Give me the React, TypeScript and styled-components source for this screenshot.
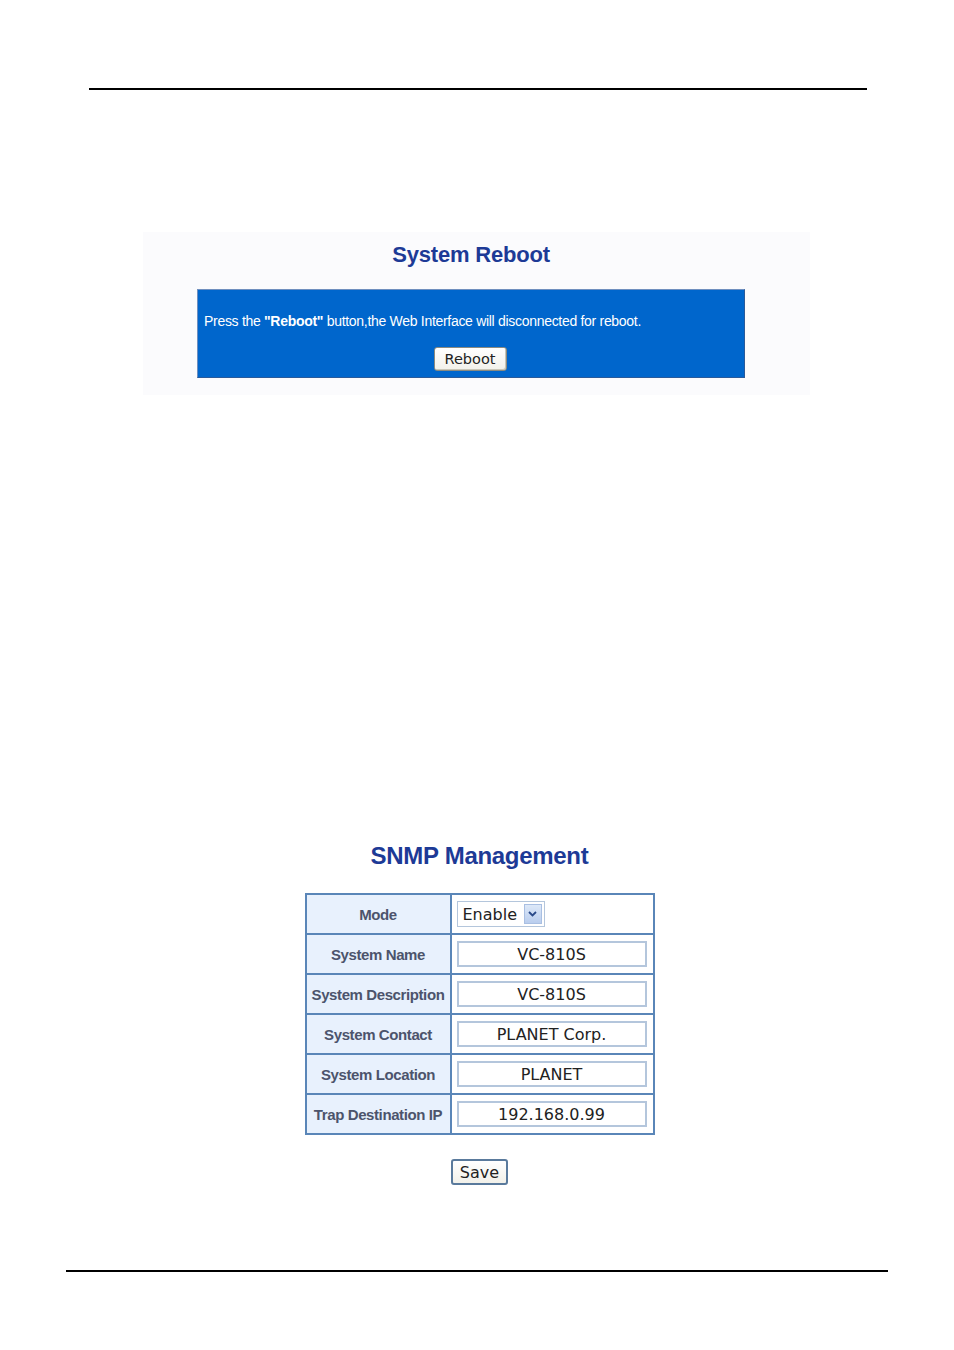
import React from 'react'
import styled, { createGlobalStyle } from 'styled-components'

const GlobalStyle = createGlobalStyle`
  html, body {
    margin: 0;
    padding: 0;
    background: #ffffff;
  }
  body {
    font-family: "Liberation Sans", Arial, sans-serif;
  }
`

const Page = styled.div`
  width: 954px;
  height: 1350px;
  position: relative;
  display: flex;
  flex-direction: column;
`

const Rule = styled.div<{ $left: number; $width: number; $top: number }>`
  margin-left: ${({ $left }) => $left}px;
  margin-top: ${({ $top }) => $top}px;
  width: ${({ $width }) => $width}px;
  height: 2px;
  background: #000;
`

const Shot = styled.div`
  margin-top: 142px;
  margin-left: 143px;
  width: 667px;
  height: 163px;
  background: #fbfbfd;
  box-sizing: border-box;
  padding-left: 54px;
  padding-top: 10px;
`

const RebootTitle = styled.h2`
  margin: 0;
  width: 548px;
  text-align: center;
  font-size: 22px;
  line-height: 26px;
  font-weight: bold;
  color: #1d3a96;
  letter-spacing: -0.2px;
`

const BlueBox = styled.div`
  margin-top: 21px;
  width: 548px;
  height: 89px;
  box-sizing: border-box;
  background: #0066cc;
  border-top: 1px solid #6f8fbf;
  border-left: 1px solid #6f8fbf;
  border-right: 1px solid #2a5a9a;
  border-bottom: 1px solid #2a5a9a;
  display: flex;
  flex-direction: column;
  align-items: center;
  padding-top: 23px;
`

const Message = styled.p`
  margin: 0;
  align-self: flex-start;
  padding-left: 6px;
  color: #ffffff;
  font-size: 14px;
  line-height: 16px;
  letter-spacing: -0.3px;
  b {
    font-weight: bold;
  }
`

const PushButton = styled.button<{ $w: number; $h: number; $fs: number; $border: string }>`
  width: ${({ $w }) => $w}px;
  height: ${({ $h }) => $h}px;
  padding: 0;
  font-family: "DejaVu Sans", Verdana, sans-serif;
  font-size: ${({ $fs }) => $fs}px;
  color: #222;
  background: linear-gradient(#ffffff, #f2f1ea);
  border: 1px solid ${({ $border }) => $border};
  border-radius: 3px;
  box-shadow: inset -1px -1px 0 #c9c6b8;
  cursor: pointer;
`

const RebootButton = styled(PushButton)`
  margin-top: 18px;
  margin-left: -2px;
`

const Snmp = styled.div`
  margin-top: 447px;
  display: flex;
  flex-direction: column;
  align-items: center;
  padding-left: 5px;
`

const SnmpTitle = styled.h2`
  margin: 0;
  font-size: 24px;
  line-height: 28px;
  font-weight: bold;
  color: #1d3a96;
  letter-spacing: -0.3px;
`

const Table = styled.table`
  margin-top: 23px;
  width: 350px;
  border-collapse: collapse;
  border: 2px solid #3f6fa8;
`

const Row = styled.tr`
  height: 40px;
`

const Label = styled.td`
  width: 143px;
  padding: 0;
  background: #e8f1fd;
  border: 2px solid #5a86b8;
  text-align: center;
  font-size: 15px;
  font-weight: bold;
  color: #4c546c;
  letter-spacing: -0.4px;
  white-space: nowrap;
`

const Value = styled.td`
  padding: 0 0 0 5px;
  background: #ffffff;
  border: 2px solid #5a86b8;
`

const TextBox = styled.input`
  display: block;
  width: 190px;
  height: 26px;
  box-sizing: border-box;
  border: 2px solid #b4c6dc;
  background: #fff;
  text-align: center;
  font-family: "DejaVu Sans", Verdana, sans-serif;
  font-size: 16px;
  color: #222;
  padding: 0;
`

const Select = styled.div`
  width: 88px;
  height: 26px;
  box-sizing: border-box;
  border: 1px solid #b4c6dc;
  display: flex;
  align-items: center;
  justify-content: space-between;
  padding: 0 2px 0 5px;
  font-family: "DejaVu Sans", Verdana, sans-serif;
  font-size: 16px;
  color: #222;
`

const Arrow = styled.span`
  width: 18px;
  height: 20px;
  background: linear-gradient(#dde8f8, #b9cdee);
  border: 1px solid #a9bfe2;
  box-sizing: border-box;
  display: flex;
  align-items: center;
  justify-content: center;
`

const SaveButton = styled(PushButton)`
  margin-top: 24px;
  border-width: 2px;
  box-shadow: none;
`

const rows = [
  ['System Name', 'VC-810S'],
  ['System Description', 'VC-810S'],
  ['System Contact', 'PLANET Corp.'],
  ['System Location', 'PLANET'],
  ['Trap Destination IP', '192.168.0.99'],
]

export default function App() {
  return (
    <Page>
      <GlobalStyle />
      <Rule $left={89} $width={778} $top={88} />
      <Shot>
        <RebootTitle>System Reboot</RebootTitle>
        <BlueBox>
          <Message>
            Press the <b>"Reboot"</b> button,the Web Interface will disconnected for reboot.
          </Message>
          <RebootButton $w={73} $h={24} $fs={14.5} $border="#8a8a80">Reboot</RebootButton>
        </BlueBox>
      </Shot>
      <Snmp>
        <SnmpTitle>SNMP Management</SnmpTitle>
        <Table>
          <tbody>
            <Row>
              <Label>Mode</Label>
              <Value>
                <Select>
                  Enable
                  <Arrow>
                    <svg width="9" height="6" viewBox="0 0 9 6">
                      <path d="M1 1 L4.5 4.5 L8 1" fill="none" stroke="#2a4a8a" strokeWidth="1.8" />
                    </svg>
                  </Arrow>
                </Select>
              </Value>
            </Row>
            {rows.map(([label, value]) => (
              <Row key={label}>
                <Label>{label}</Label>
                <Value>
                  <TextBox defaultValue={value} />
                </Value>
              </Row>
            ))}
          </tbody>
        </Table>
        <SaveButton $w={57} $h={26} $fs={16} $border="#5a7a9c">Save</SaveButton>
      </Snmp>
      <Rule $left={66} $width={822} $top={85} />
    </Page>
  )
}
